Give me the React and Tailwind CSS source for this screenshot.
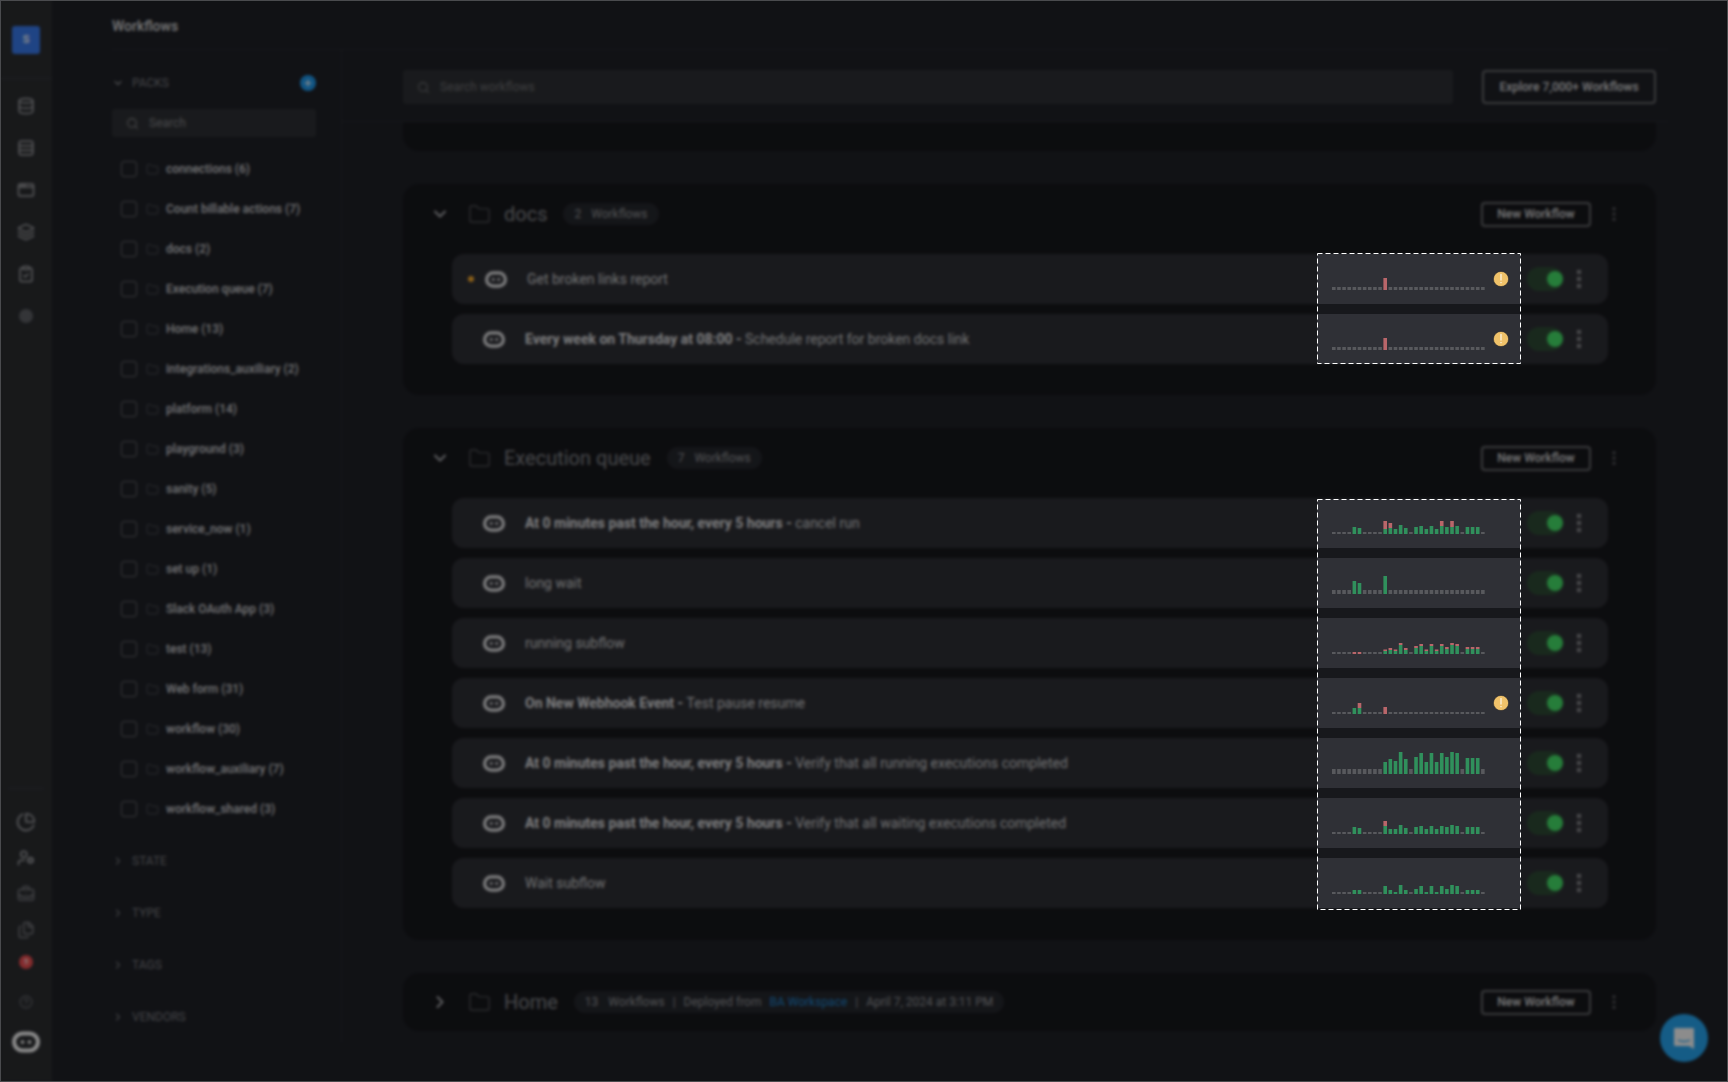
import {
  AppWindow,
  BriefcaseBusiness,
  ChartPie,
  ChevronDown,
  ChevronRight,
  CircleHelp,
  ClipboardCheck,
  Database,
  EllipsisVertical,
  Files,
  Folder,
  Layers,
  Plus,
  Rows3,
  Search,
  UserCog,
} from "lucide-react";

const packs = [
  "connections (6)",
  "Count billable actions (7)",
  "docs (2)",
  "Execution queue (7)",
  "Home (13)",
  "integrations_auxiliary (2)",
  "platform (14)",
  "playground (3)",
  "sanity (5)",
  "service_now (1)",
  "set up (1)",
  "Slack OAuth App (3)",
  "test (13)",
  "Web form (31)",
  "workflow (30)",
  "workflow_auxiliary (7)",
  "workflow_shared (3)",
];

// sparkline bars: index -> [green height, red height], everything else is a grey stub
const docsChart = { grey: 3, warn: true, bars: { 10: [0, 12] } };
const queueCharts = [
  {
    grey: 2,
    bars: {
      4: [7, 0], 5: [6, 0], 10: [5, 8], 11: [6, 5], 12: [5, 0], 13: [9, 0], 14: [6, 0], 16: [7, 0], 17: [8, 0],
      18: [5, 0], 19: [8, 0], 20: [5, 0], 21: [8, 5], 22: [7, 0], 23: [7, 6], 24: [8, 0], 26: [7, 0], 27: [7, 0], 28: [7, 0],
    },
  },
  { grey: 4, bars: { 4: [13, 0], 5: [11, 0], 10: [18, 0] } },
  {
    grey: 2,
    bars: {
      4: [0, 2], 5: [0, 2], 10: [3, 1.5], 11: [4, 2], 12: [3, 1.5], 13: [9, 2], 14: [4, 2], 16: [6, 2], 17: [8, 2],
      18: [3, 1.5], 19: [8, 2], 20: [3, 1.5], 21: [8, 2], 22: [5, 2], 23: [9, 2], 24: [8, 2], 26: [5, 2], 27: [5, 2], 28: [5, 2],
    },
  },
  { grey: 2, warn: true, bars: { 4: [6, 0], 5: [6, 5], 10: [0, 7] } },
  {
    grey: 5,
    bars: {
      10: [12, 0], 11: [15, 0], 12: [13, 0], 13: [22, 0], 14: [15, 0], 16: [17, 0], 17: [21, 0], 18: [12, 0], 19: [21, 0],
      20: [12, 0], 21: [21, 0], 22: [17, 0], 23: [22, 0], 24: [21, 0], 26: [16, 0], 27: [16, 0], 28: [16, 0],
    },
  },
  {
    grey: 2,
    bars: {
      4: [7, 0], 5: [6, 0], 10: [8, 5], 11: [5, 0], 12: [5, 0], 13: [9, 0], 14: [6, 0], 16: [7, 0], 17: [8, 0], 18: [5, 0],
      19: [8, 0], 20: [5, 0], 21: [8, 0], 22: [7, 0], 23: [9, 0], 24: [8, 0], 26: [7, 0], 27: [7, 0], 28: [7, 0],
    },
  },
  {
    grey: 2,
    bars: {
      4: [4, 0], 5: [4, 0], 10: [8, 0], 11: [4, 0], 12: [2, 0], 13: [9, 0], 14: [4, 0], 16: [5, 0], 17: [8, 0], 18: [2, 0],
      19: [8, 0], 20: [2, 0], 21: [8, 0], 22: [5, 0], 23: [9, 0], 24: [8, 0], 26: [4, 0], 27: [4, 0], 28: [4, 0],
    },
  },
];

const queueRows = [
  { bold: "At 0 minutes past the hour, every 5 hours", name: "cancel run" },
  { name: "long wait" },
  { name: "running subflow" },
  { bold: "On New Webhook Event", name: "Test pause resume" },
  { bold: "At 0 minutes past the hour, every 5 hours", name: "Verify that all running executions completed" },
  { bold: "At 0 minutes past the hour, every 5 hours", name: "Verify that all waiting executions completed" },
  { name: "Wait subflow" },
];

function RobotIcon({ className }) {
  return (
    <svg viewBox="0 0 24 18" fill="none" className={className}>
      <rect x="1.75" y="1.75" width="20.5" height="14.5" rx="7.25" stroke="currentColor" strokeWidth="3.5" />
      <circle cx="9" cy="9" r="1.6" fill="currentColor" />
      <circle cx="15" cy="9" r="1.6" fill="currentColor" />
    </svg>
  );
}

function Sparkline({ chart }) {
  const slots = Array.from({ length: 30 }, (_, i) => i);
  return (
    <svg viewBox="0 0 204 50" className="block h-[50px] w-[204px]">
      {slots.map((i) => {
        const x = 15 + i * 5.14;
        const bar = chart.bars[i];
        if (!bar) {
          return <rect key={i} x={x} y={36 - chart.grey} width="3.6" height={chart.grey} fill="#58595d" />;
        }
        const [green, red] = bar;
        return (
          <g key={i}>
            <rect x={x} y={36 - green} width="3.6" height={green} fill="#30905c" />
            <rect x={x} y={36 - green - red} width="3.6" height={red} fill="#b9666a" />
          </g>
        );
      })}
      {chart.warn && (
        <g>
          <circle cx="184" cy="25" r="7.6" fill="#f0c26a" stroke="#26272b" strokeWidth="0.6" />
          <rect x="183.5" y="20" width="1" height="6.5" fill="#fff" />
          <rect x="183.5" y="28" width="1" height="1.2" fill="#fff" />
        </g>
      )}
    </svg>
  );
}

// the tour highlight that sits above the dimmed page; its dashed frame cuts into the rows
function Spotlight({ charts, height, className, innerClassName }) {
  return (
    <div className={"absolute left-[1317px] w-[204px] overflow-hidden bg-[#17181c] " + className}>
      <div className={"flex flex-col gap-[10px] " + innerClassName}>
        {charts.map((chart, i) => (
          <div key={i} className="h-[50px] shrink-0 bg-[#2f3036]">
            <Sparkline chart={chart} />
          </div>
        ))}
      </div>
      <svg className="absolute inset-0 h-full w-full" fill="none">
        <rect x="0.5" y="0.5" width="203" height={height - 1} stroke="#fff" strokeDasharray="5 3" />
      </svg>
    </div>
  );
}

function WorkflowRow({ bold, name, pending }) {
  return (
    <div className="flex h-[50px] items-center rounded-xl bg-[#2f3036] pl-[18px] pr-[27px]">
      {pending ? (
        <span className="ml-[-2px] mr-[11px] h-[6px] w-[6px] rounded-full bg-[#ffb02e]" />
      ) : (
        <span className="w-[13px]" />
      )}
      <RobotIcon className="h-[17px] w-[22px] text-[#e8e8ea]" />
      <div className="ml-[20px] flex-1 truncate text-[14px] text-[#cfd0d3]">
        {bold && <span className="font-bold text-[#e4e4e7]">{bold} - </span>}
        {name}
      </div>
      <div className="w-[205px]" />
      <div className="flex h-6 w-9 items-center justify-end rounded-full bg-[#2f4c36]">
        <span className="h-4 w-4 rounded-full bg-[#46e36a]" />
      </div>
      <div className="ml-[14px] flex w-1 flex-col gap-[3px]">
        <span className="h-1 w-1 bg-[#8a8a8d]" />
        <span className="h-1 w-1 bg-[#8a8a8d]" />
        <span className="h-1 w-1 bg-[#8a8a8d]" />
      </div>
    </div>
  );
}

function GroupHeader({ open, title, children }) {
  const Chevron = open ? ChevronDown : ChevronRight;
  return (
    <div className="flex h-[24px] items-center pl-[27px] pr-[33px]">
      <Chevron size={20} className="text-[#a9aaae]" strokeWidth={2.5} />
      <Folder size={23} strokeWidth={1.25} className="ml-[18px] text-[#5a5c61]" />
      <span className="ml-[13px] text-[20px] text-[#85878c]">{title}</span>
      <div className="ml-[16px] flex h-[22px] items-center gap-1 rounded-full bg-[#26282e] px-[11px] text-[12px] text-[#97989c]">
        {children}
      </div>
      <button className="ml-auto h-[25px] w-[110px] rounded-[4px] border-2 border-[#6b6c70] text-[12px] font-medium text-[#dcdcde]">
        New Workflow
      </button>
      <EllipsisVertical size={18} className="ml-[14px] text-[#6a6b70]" />
    </div>
  );
}

function FilterHeading({ label }) {
  return (
    <div className="flex h-[52px] items-center">
      <ChevronRight size={12} className="text-[#6f7075]" strokeWidth={2.5} />
      <span className="ml-[8px] text-[12px] text-[#7d7e83]">{label}</span>
    </div>
  );
}

export default function App() {
  const railTop = [Database, Rows3, AppWindow, Layers, ClipboardCheck];
  const railBottom = [ChartPie, UserCog, BriefcaseBusiness, Files];

  return (
    <div className="relative h-screen w-screen overflow-hidden bg-[#1f2127] font-['Roboto',sans-serif]">
      <div className="flex h-full">
        <nav className="flex h-full w-[52px] flex-col items-center bg-[#2c2e31] text-[#a5a6aa]">
          <div className="mt-[26px] flex h-7 w-7 items-center justify-center rounded-[3px] bg-[#3a7cf0] text-[11px] font-semibold text-white">
            S
          </div>
          <div className="mt-[24px] h-px w-full bg-[#3a3c40]" />
          <div className="mt-[18px] flex flex-col gap-6">
            {railTop.map((Icon, i) => (
              <Icon key={i} size={18} />
            ))}
            <div className="flex h-[18px] items-center justify-center">
              <span className="h-[14px] w-[14px] rounded-full bg-[#5f6166]" />
            </div>
          </div>
          <div className="mt-auto mb-[15px] h-px w-9 bg-[#3a3c40]" />
          {railBottom.map((Icon, i) => (
            <div key={i} className="flex h-9 items-center justify-center">
              <Icon size={i === 0 ? 20 : 18} className={i > 1 ? "text-[#7a7b80]" : ""} />
            </div>
          ))}
          <div className="flex h-9 items-start justify-center pt-[7px]">
            <span className="flex h-[14px] w-[14px] items-center justify-center rounded-full bg-[#f04f52] text-[8px] text-white">
              5
            </span>
          </div>
          <div className="flex h-9 items-center justify-center">
            <CircleHelp size={14} className="text-[#6a6b70]" />
          </div>
          <div className="mb-[22px] mt-1 flex h-9 items-center justify-center">
            <RobotIcon className="h-[22px] w-[28px] text-white" />
          </div>
        </nav>

        <div className="flex min-w-0 flex-1 flex-col pl-[60px] pr-[60px]">
          <header className="flex h-[50px] shrink-0 items-center border-b border-[#2b2d32] pt-[3px] text-[14px] font-medium text-[#dcdcde]">
            Workflows
          </header>

          <div className="flex min-h-0 flex-1">
            <aside className="h-[992px] w-[230px] shrink-0 border-r border-[#2b2d32] pr-[25px] pt-[23px]">
              <div className="flex h-5 items-center">
                <ChevronDown size={12} className="text-[#8b8c90]" strokeWidth={2.5} />
                <span className="ml-[8px] text-[12px] text-[#7d7e83]">PACKS</span>
                <span className="ml-auto flex h-4 w-4 items-center justify-center rounded-full bg-[#1f9bf0] text-white">
                  <Plus size={10} strokeWidth={3} />
                </span>
              </div>
              <div className="mt-[16px] flex h-7 items-center rounded-[3px] bg-[#2f3135] pl-[14px] text-[12px] text-[#85868a]">
                <Search size={13} />
                <span className="ml-[10px]">Search</span>
              </div>
              <ul className="mt-[12px]">
                {packs.map((pack) => (
                  <li key={pack} className="flex h-10 items-center pl-[9px]">
                    <span className="h-4 w-4 rounded-[3px] border border-[#6a6b70]" />
                    <Folder size={13} strokeWidth={1.25} className="ml-[9px] text-[#6a6b70]" />
                    <span className="ml-[7px] text-[12px] font-medium text-[#d4d4d8]">{pack}</span>
                  </li>
                ))}
              </ul>
              <div className="mt-[6px]">
                <FilterHeading label="STATE" />
                <FilterHeading label="TYPE" />
                <FilterHeading label="TAGS" />
                <FilterHeading label="VENDORS" />
              </div>
            </aside>

            <main className="flex min-w-0 flex-1 flex-col">
              <div className="flex h-[72px] shrink-0 items-start border-b border-[#2b2d32] pl-[61px] pr-[12px] pt-[20px]">
                <div className="flex h-[34px] w-[1051px] items-center rounded-[3px] bg-[#2f3135] pl-[14px] text-[12px] text-[#717276]">
                  <Search size={13} />
                  <span className="ml-[10px]">Search workflows</span>
                </div>
                <button className="ml-[29px] h-[34px] w-[174px] rounded-[4px] border-2 border-[#6b6c70] text-[12px] font-medium text-[#dcdcde]">
                  Explore 7,000+ Workflows
                </button>
              </div>

              <div className="ml-[61px] mr-[12px] flex flex-col gap-[33px]">
                <div className="h-[29px] rounded-b-2xl bg-[#17181c]" />

                <section className="rounded-2xl bg-[#17181c] pb-[31px] pt-[18px]">
                  <GroupHeader open title="docs">
                    <span>2</span>
                    <span className="ml-1.5">Workflows</span>
                  </GroupHeader>
                  <div className="ml-[49px] mr-[48px] mt-[28px] flex flex-col gap-[10px]">
                    <WorkflowRow pending name="Get broken links report" />
                    <WorkflowRow bold="Every week on Thursday at 08:00" name="Schedule report for broken docs link" />
                  </div>
                </section>

                <section className="rounded-2xl bg-[#17181c] pb-[32px] pt-[18px]">
                  <GroupHeader open title="Execution queue">
                    <span>7</span>
                    <span className="ml-1.5">Workflows</span>
                  </GroupHeader>
                  <div className="ml-[49px] mr-[48px] mt-[28px] flex flex-col gap-[10px]">
                    {queueRows.map((row, i) => (
                      <WorkflowRow key={i} bold={row.bold} name={row.name} />
                    ))}
                  </div>
                </section>

                <section className="rounded-2xl bg-[#17181c] py-[17px]">
                  <GroupHeader title="Home">
                    <span>13</span>
                    <span className="ml-1.5">Workflows</span>
                    <span className="mx-1">|</span>
                    <span>Deployed from</span>
                    <span className="ml-1 text-[#1f86d0]">BA Workspace</span>
                    <span className="mx-1">|</span>
                    <span>April 7, 2024 at 3:11 PM</span>
                  </GroupHeader>
                </section>
              </div>
            </main>
          </div>
        </div>
      </div>

      <button className="absolute bottom-[20px] right-[20px] flex h-12 w-12 items-center justify-center rounded-full bg-[#27a8f5]">
        <svg viewBox="0 0 24 24" className="h-6 w-6" fill="#ffffff">
          <path d="M2 3a1 1 0 0 1 1-1h18a1 1 0 0 1 1 1v20l-5-3H3a1 1 0 0 1-1-1z" />
          <path d="M6 14c3 2 9 2 12 0" stroke="#27a8f5" strokeWidth="1.5" fill="none" />
        </svg>
      </button>

      {/* dimmed, blurred layer of the product tour */}
      <div className="absolute inset-0 bg-black/45 backdrop-blur-[1.5px]" />

      <Spotlight charts={[docsChart, docsChart]} height={111} className="top-[253px] h-[111px]" innerClassName="mt-px" />
      <Spotlight charts={queueCharts} height={411} className="top-[499px] h-[411px]" innerClassName="-mt-px" />

      <div className="pointer-events-none absolute inset-0 border border-[#4a4b4e]" />
    </div>
  );
}
